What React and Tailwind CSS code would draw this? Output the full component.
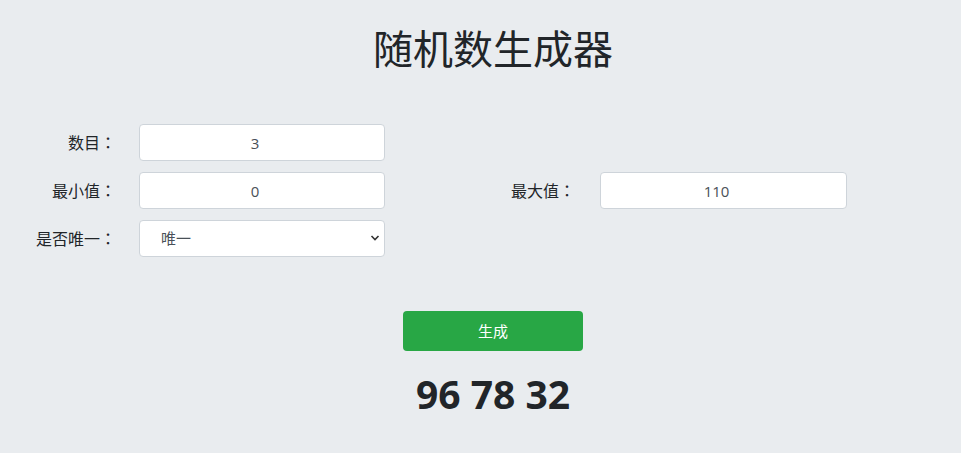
import React, { useState } from 'react';

function Colon() {
    // centered full-width colon, as on the reference
    return <span className="font-['Noto_Sans_CJK_TC',sans-serif]">：</span>;
}

export default function App() {
    const [count, setCount] = useState('3');
    const [min, setMin] = useState('0');
    const [max, setMax] = useState('110');
    const [unique, setUnique] = useState('unique');
    const [result] = useState('96 78 32');

    const inputCls = 'h-[37px] rounded-[4px] border border-[#ced4da] bg-white pr-[14px] text-center text-[15px] text-[#495057] outline-none';

    return (
        <div className="min-h-[453px] w-full bg-[#e9ecef] text-[#212529] font-['Open_Sans','Noto_Sans_CJK_SC',sans-serif]">
            <div className="ml-[25px] w-[936px]">
                <h1 className="pt-[22px] text-center text-[40px] leading-[54px] font-normal">随机数生成器</h1>
            </div>

            <div className="mt-[48px] flex flex-col gap-[11px]">
                <div className="flex items-center">
                    <label className="w-[116px] text-right text-[16px]">数目<Colon /></label>
                    <input className={`ml-[23px] w-[246px] ${inputCls}`} value={count} onChange={e => setCount(e.target.value)} />
                </div>
                <div className="flex items-center">
                    <label className="w-[116px] text-right text-[16px]">最小值<Colon /></label>
                    <input className={`ml-[23px] w-[246px] ${inputCls}`} value={min} onChange={e => setMin(e.target.value)} />
                    <label className="w-[190px] text-right text-[16px]">最大值<Colon /></label>
                    <input className={`ml-[25px] w-[247px] ${inputCls}`} value={max} onChange={e => setMax(e.target.value)} />
                </div>
                <div className="flex items-center">
                    <label className="w-[116px] text-right text-[16px]">是否唯一<Colon /></label>
                    <div className="relative ml-[23px]">
                        <select
                            value={unique}
                            onChange={e => setUnique(e.target.value)}
                            className="h-[37px] w-[246px] appearance-none rounded-[4px] border border-[#ced4da] bg-white pl-[21px] text-[15px] text-[#495057] outline-none"
                        >
                            <option value="unique">唯一</option>
                            <option value="repeat">可重复</option>
                        </select>
                        <svg className="pointer-events-none absolute right-[5px] top-[14px]" width="10" height="8" viewBox="0 0 10 8">
                            <path d="M1.5 2 L5 5.5 L8.5 2" fill="none" stroke="#333" strokeWidth="1.6" />
                        </svg>
                    </div>
                </div>
            </div>

            <div className="ml-[25px] w-[936px] flex flex-col items-center">
                <button className="mt-[54px] h-[40px] w-[180px] rounded-[4px] bg-[#28a745] text-[15px] text-white">生成</button>
                <div className="mt-[16px] text-[39px] font-bold leading-[54px]">{result}</div>
            </div>
        </div>
    );
}
